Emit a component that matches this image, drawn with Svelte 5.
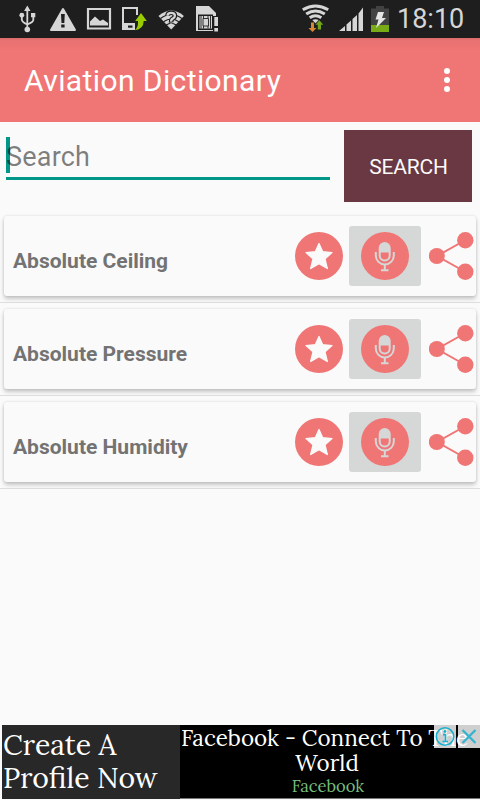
<script lang="ts">
	const terms = ['Absolute Ceiling', 'Absolute Pressure', 'Absolute Humidity'];

	let query = $state('');
</script>

<div class="screen">
	<div class="status-bar">
		<svg class="status-icons" width="230" height="38" viewBox="0 0 230 38" fill="#d6d6d6">
			<!-- usb -->
			<g fill="none" stroke="#d6d6d6" stroke-width="1.8">
				<path d="M27.3 10v19M21.8 16v3.500q0 2.500 5.500 5M33.300 15v5q0 2-6 4.500" />
			</g>
			<path d="M27.300 5.500l3.200 5.500h-6.400zM31 13h4.300v4.300H31z" />
			<circle cx="21.8" cy="15.2" r="2.4" />
			<circle cx="27.3" cy="29.500" r="2.800" />
			<!-- warning -->
			<path d="M63 9L75 30H51z" stroke="#d6d6d6" stroke-width="2" stroke-linejoin="round" />
			<path d="M61 14h3.800l-.5 9h-2.800zM61.200 24.500h3.400v3h-3.400z" fill="#1e1e1e" />
			<!-- picture -->
			<path d="M88 9h22v19.500H88z" fill="none" stroke="#d6d6d6" stroke-width="2.200" />
			<path d="M90 25.500v-4l5-5 5 4.500 3-1.500 5 3.500v2.500z" />
			<!-- phone update -->
			<path d="M122 7h16v8h-2V9h-12v14h11v7h-13z" />
			<path d="M128 25.500h4.500v2.200H128z" fill="#1e1e1e" />
			<path d="M141 13l5.800 8h-3.100q-.2 8-8.700 9.300 3.500-3.500 3-9.300h-2.800z" fill="#99cc00" />
			<!-- unknown wifi -->
			<path d="M158.500 16q12.700-11 25.400 0L171.200 29.500z" />
			<path
				d="M160.500 18.500q10.700-8 21.400 0M163.500 21.800q7.700-5.500 15.400 0M166.300 25q4.900-3.500 9.800 0"
				fill="none"
				stroke="#1e1e1e"
				stroke-width="1.100"
			/>
			<path
				d="M167.500 15.800q0-3 3.700-3t3.700 3q0 1.700-2 2.800t-1.700 4"
				fill="none"
				stroke="#1e1e1e"
				stroke-width="4.600"
			/>
			<path
				d="M167.500 15.800q0-3 3.700-3t3.700 3q0 1.700-2 2.800t-1.700 3M171.200 23.500v2.500"
				fill="none"
				stroke="#d6d6d6"
				stroke-width="2.300"
			/>
			<!-- sim card -->
			<path d="M196 6h13l7 7v18h-20z" />
			<path d="M198 14.500h15v15.500h-15zM213 16h6v16h-6z" fill="#1e1e1e" />
			<path d="M199.500 16h12.500v12.500h-12.500z" />
			<path
				d="M203 18.500h5.500v7.500H203zM201 16v12.500M210.500 16v12.500M203.500 16v2.500M208 16v2.500M203.500 26v2.500M208 26v2.500"
				fill="none"
				stroke="#1e1e1e"
				stroke-width="0.900"
			/>
			<path d="M214.300 17h3.700v9h-3.700zM214.300 28h3.700v3.500h-3.700z" />
		</svg>
		<svg class="system-icons" width="95" height="38" viewBox="300 0 95 38" fill="#d6d6d6">
			<!-- wifi with traffic arrows -->
			<g fill="none" stroke="#d6d6d6" stroke-width="3">
				<path d="M302.800 9.700q12.700-7.600 25.400 0M306.200 13.900q9.300-6 18.600 0M309.700 17.800q5.800-4 11.600 0" />
			</g>
			<path d="M312.300 20q3.200-1.700 6.400 0l-3.200 3.200z" />
			<path d="M311 22.500h3V28h2.500L312.500 32l-4-4h2.500z" fill="#d98733" />
			<path d="M317.800 29.500v-4.800h-2.300l3.900-4.500 3.900 4.500H321v4.800z" fill="#73a51a" />
			<!-- signal -->
			<path d="M339 31l6-5V31zM346.500 24.500l4.500-4V31h-4.500zM352.500 19l4.500-4V31h-4.500zM358.500 13.500l4.500-6V31h-4.500z" />
			<!-- battery -->
			<path d="M371 8.500h5V6h8v2.500h5V25h-18z" fill="#424242" />
			<path d="M371 25h18v7h-18z" fill="#78ab16" />
			<path d="M378 12h6l-2 6h4L376 28l2.500-8.500h-3z" fill="#e4e4e4" />
		</svg>
		<time>18:10</time>
	</div>

	<header>
		<h1>Aviation Dictionary</h1>
		<button class="overflow" aria-label="More options"><i></i><i></i><i></i></button>
	</header>

	<form class="search" onsubmit={(e) => e.preventDefault()}>
		<div class="field">
			<span class="caret"></span>
			<input placeholder="Search" aria-label="Search" bind:value={query} />
		</div>
		<button class="submit">SEARCH</button>
	</form>

	<ul>
		{#each terms as term}
			<li>
				<div class="card">
					<h2>{term}</h2>
					<button class="star" aria-label="Favourite">
						<svg width="48" height="48" viewBox="0 0 48 48">
							<circle cx="24" cy="24" r="24" fill="#f07575" />
							<path
								d="M24 11.500l3.700 8.200 9.300.9-7 6.200 2.300 9.700-8.300-4.800-8.300 4.800 2.300-9.700-7-6.200 9.300-.9z"
								fill="#fafafa"
								stroke="#fafafa"
								stroke-width="1.300"
								stroke-linejoin="round"
							/>
						</svg>
					</button>
					<button class="mic" aria-label="Pronounce">
						<svg width="48" height="48" viewBox="0 0 48 48">
							<circle cx="24" cy="24" r="24" fill="#f07575" />
							<g fill="none" stroke="#d6d7d7" stroke-width="2">
								<rect x="18.700" y="11" width="10" height="17.500" rx="5" />
								<path d="M14.800 20v3.500a9 9 0 0 0 18 0V20" />
								<path d="M23.800 32.500V38M20 38.200h7.500" />
							</g>
							<path d="M19 20.500V16a4.800 4.800 0 0 1 9.600 0v4.500z" fill="#d6d7d7" />
						</svg>
					</button>
					<button class="share" aria-label="Share">
						<svg width="46" height="48" viewBox="0 0 46 48" fill="#f07575">
							<path d="M36.500 8L8 24l28.500 16" fill="none" stroke="#f07575" stroke-width="2" />
							<circle cx="7.800" cy="24" r="8" />
							<circle cx="36.300" cy="8.200" r="8.200" />
							<circle cx="36.300" cy="39.800" r="8.200" />
						</svg>
					</button>
				</div>
			</li>
		{/each}
	</ul>

	<aside>
		<div class="ad-action">Create A<br />Profile Now</div>
		<div class="ad-body">
			<div class="ad-title">Facebook - Connect To The</div>
			<div class="ad-title world">World</div>
			<div class="ad-brand">Facebook</div>
		</div>
		<div class="ad-badges">
			<svg width="22" height="23" viewBox="0 0 22 23">
				<circle cx="11" cy="11.500" r="8.700" fill="none" stroke="#17b1cf" stroke-width="1.600" />
				<path d="M9 9.700h2.500v6.500M8.500 16.500h5.500" fill="none" stroke="#17b1cf" stroke-width="1.700" />
				<circle cx="11" cy="6.500" r="1.400" fill="#17b1cf" />
			</svg>
			<svg width="22" height="23" viewBox="0 0 22 23">
				<path d="M4.500 5l13 13M17.500 5l-13 13" stroke="#36b4cf" stroke-width="2.300" />
			</svg>
		</div>
	</aside>
</div>

<style>
	:global(body) {
		margin: 0;
	}

	.screen {
		width: 480px;
		height: 800px;
		display: flex;
		flex-direction: column;
		overflow: hidden;
		background: #fafafa;
		font-family: Roboto, 'Noto Sans', sans-serif;
	}

	button {
		padding: 0;
		border: 0;
		background: none;
		font-family: inherit;
	}
	svg {
		display: block;
		flex: none;
	}

	.status-bar {
		display: flex;
		height: 38px;
		background: #1e1e1e;
		color: #d6d6d6;
	}
	.system-icons {
		margin-left: 70px;
	}
	time {
		margin-left: 2px;
		font-size: 27px;
		line-height: 38px;
	}

	header {
		display: flex;
		align-items: center;
		justify-content: space-between;
		height: 84px;
		padding: 0 28px 0 24px;
		box-sizing: border-box;
		background: linear-gradient(#d96a6a, #e87171 2px, #f07575 12px);
		color: #fff;
	}
	h1 {
		margin: 0;
		font-size: 30px;
		font-weight: 400;
		letter-spacing: 0.4px;
	}
	.overflow {
		display: flex;
		flex-direction: column;
		gap: 3px;
		padding: 0 2px;
	}
	.overflow i {
		width: 6px;
		height: 6px;
		border-radius: 50%;
		background: #fff;
	}

	.search {
		display: flex;
		justify-content: space-between;
		height: 88px;
		padding: 8px 8px 0 6px;
		box-sizing: border-box;
	}
	.field {
		position: relative;
		width: 324px;
		height: 50px;
		box-sizing: border-box;
		border-bottom: 3px solid #009688;
	}
	.caret {
		position: absolute;
		left: 0;
		top: 7px;
		width: 4px;
		height: 36px;
		background: #009688;
	}
	input {
		position: relative;
		width: 100%;
		height: 36px;
		margin-top: 9px;
		padding: 0;
		border: 0;
		outline: 0;
		background: transparent;
		font: 27px Roboto, sans-serif;
		letter-spacing: 0.2px;
	}
	input::placeholder {
		color: rgba(0, 0, 0, 0.5);
		opacity: 1;
	}
	.submit {
		width: 128px;
		height: 72px;
		padding: 2px 0 0 1px;
		background: #693842;
		color: #fafafa;
		font-size: 21px;
		letter-spacing: -0.2px;
	}

	ul {
		flex: 1;
		margin: 0;
		padding: 0;
		list-style: none;
	}
	li {
		padding: 6px 4px;
		border-bottom: 1px solid #dedede;
	}
	.card {
		display: flex;
		align-items: center;
		height: 80px;
		padding-left: 9px;
		border-radius: 3px;
		background: #fafafa;
		box-shadow:
			0 3px 4px rgba(0, 0, 0, 0.2),
			0 0 3px rgba(0, 0, 0, 0.12);
	}
	h2 {
		flex: 1;
		margin: 9px 0 0;
		font-size: 21px;
		font-weight: 700;
		color: #737373;
	}
	.mic {
		display: grid;
		place-items: center;
		width: 72px;
		height: 60px;
		margin: 0 8px 0 6px;
		border-radius: 3px;
		background: #d6d7d7;
	}
	.share {
		width: 47px;
	}

	aside {
		position: relative;
		display: flex;
		height: 75px;
		padding-left: 2px;
		font-family: Lora, 'Liberation Serif', serif;
		color: #fff;
		white-space: nowrap;
	}
	.ad-action {
		width: 178px;
		height: 74px;
		padding: 3px 0 0 1px;
		box-sizing: border-box;
		background: #282828;
		font-size: 28.4px;
		line-height: 33px;
	}
	.ad-body {
		flex: 1;
		height: 73px;
		overflow: hidden;
		border-bottom: 1px solid #777;
		background: #000;
	}
	.ad-title {
		padding-left: 1px;
		font-size: 22.4px;
		line-height: 25px;
	}
	.world {
		padding: 0 6px 0 0;
		text-align: center;
	}
	.ad-brand {
		padding-right: 4px;
		font-size: 16.5px;
		line-height: 22px;
		text-align: center;
		color: #77bd7d;
	}
	.ad-badges {
		position: absolute;
		top: 0;
		right: 0;
		display: flex;
		gap: 2px;
	}
	.ad-badges svg {
		background: rgba(255, 255, 255, 0.81);
	}
</style>
